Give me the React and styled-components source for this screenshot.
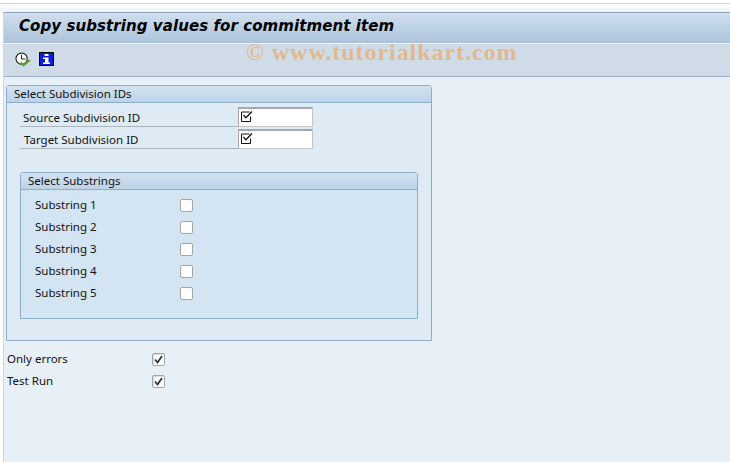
import React from 'react';
import styled, { createGlobalStyle } from 'styled-components';

const GlobalStyle = createGlobalStyle`
    html, body {
        margin: 0;
        padding: 0;
        background: #fff;
    }
    body {
        font-family: "Noto Sans", "DejaVu Sans", sans-serif;
        font-size: 11.5px;
        color: #111;
    }
`
const Screen = styled.div`
    width: 730px;
    height: 462px;
    overflow: hidden;
    position: relative;
    display: flex;
    flex-direction: column;
`
const MenuStrip = styled.div`
    height: 8px;
    margin-top: 3px;
    border-top: 1px solid #d4d6d8;
    background: linear-gradient(#fdfdfe, #eef2f7);
`
const Window = styled.div`
    flex: 1;
    display: flex;
    flex-direction: column;
    margin-left: 3px;
    border-left: 1px solid #c9d5e2;
    border-top: 1px solid #8fa3b8;
    background: #e8f0f7;
`
const TitleBar = styled.div`
    height: 30px;
    display: flex;
    align-items: flex-start;
    padding-left: 15px;
    background: linear-gradient(#cfdfee, #adc3da);
    border-bottom: 1px solid #eaf1f7;
`
const Title = styled.h1`
    margin: 4px 0 0;
    font-family: "DejaVu Sans", sans-serif;
    font-size: 15px;
    font-style: italic;
    font-weight: 700;
    letter-spacing: 0.08px;
    color: #000;
    white-space: nowrap;
`
const Toolbar = styled.div`
    height: 33px;
    display: flex;
    align-items: flex-start;
    gap: 8px;
    padding: 8px 0 0 11px;
    box-sizing: border-box;
    background: #cfdce7;
    border-bottom: 1px solid #9fb3c8;
`
const IconButton = styled.span`
    display: flex;
    width: 16px;
    height: 16px;
`
const Watermark = styled.div`
    position: absolute;
    left: 246px;
    top: 39px;
    font-family: "Liberation Serif", serif;
    font-size: 24px;
    font-weight: 700;
    letter-spacing: 0.95px;
    color: rgba(240, 160, 80, 0.6);
    white-space: nowrap;
`
const Content = styled.div`
    flex: 1;
    display: flex;
    flex-direction: column;
    padding: 8px 0 0 2px;
`
const Group = styled.section`
    width: ${p => p.$width}px;
    height: ${p => p.$height}px;
    box-sizing: border-box;
    border: 1px solid #8eaccb;
    border-top-left-radius: 3px;
    border-top-right-radius: 3px;
    background: ${p => p.$inner ? '#d3e4f2' : '#deeaf4'};
`
const GroupHeader = styled.div`
    height: 17px;
    box-sizing: border-box;
    display: flex;
    align-items: center;
    padding: 0 0 1px 7px;
    background: linear-gradient(#d3e2f0, #bdd3e8);
    border-bottom: 1px solid #8eaccb;
`
const FieldList = styled.div`
    display: flex;
    flex-direction: column;
    gap: 2px;
    padding: 4px 0 0 13px;
`
const FieldRow = styled.div`
    display: flex;
    align-items: stretch;
    height: 20px;
`
const FieldLabel = styled.label`
    width: 218px;
    box-sizing: border-box;
    padding: 1px 0 0 ${p => p.$shift || 3}px;
    display: flex;
    align-items: center;
    border-bottom: 1px solid #a9b4bf;
`
const KeyInput = styled.div`
    width: 75px;
    box-sizing: border-box;
    display: flex;
    align-items: flex-start;
    padding: 2px 0 0 2px;
    background: #fff;
    border: 1px solid #a5a9ad;
    border-right-color: #c4c7ca;
    border-bottom-color: #c4c7ca;
    border-top-width: 2px;
`
const InnerWrap = styled.div`
    padding: 23px 0 0 13px;
`
const CheckList = styled.div`
    display: flex;
    flex-direction: column;
    padding-top: 4px;
`
const CheckRow = styled.div`
    height: 22px;
    display: flex;
    align-items: center;
    padding-left: ${p => p.$left}px;
`
const CheckLabel = styled.label`
    width: ${p => p.$width}px;
    padding-bottom: 1px;
`
const Box = styled.span`
    width: 13px;
    height: 13px;
    box-sizing: border-box;
    display: flex;
    align-items: center;
    justify-content: center;
    background: #fff;
    border: 1px solid #a2a6aa;
    border-radius: 2px;
    box-shadow: ${p => p.$checked ? 'inset 1px 1px 0 #d8dadc' : 'none'};
`
const BottomList = styled.div`
    display: flex;
    flex-direction: column;
    padding-top: 7px;
`

const ClockIcon = () => (
    <svg width="17" height="15" viewBox="0 0 17 15">
        <circle cx="7" cy="6.5" r="6" fill="#fff" stroke="#111" strokeWidth="1.1" />
        <path d="M7 2.5V7H11" fill="none" stroke="#111" strokeWidth="1" />
        <path d="M6 10.5l3 3.2L16 8" fill="none" stroke="#5da82e" strokeWidth="2.3" />
    </svg>
)
const InfoIcon = () => (
    <svg width="15" height="14" viewBox="0 0 15 14">
        <rect x="0.5" y="0.5" width="14" height="13" fill="#0a1fd6" stroke="#000" />
        <rect x="5.5" y="2" width="4" height="2" fill="#fff" />
        <path d="M4 5.5h5.5V10.5H11V12H4V10.5h2V7H4z" fill="#fff" />
    </svg>
)
const RequiredMark = () => (
    <svg width="12" height="11" viewBox="0 0 12 11">
        <path d="M9.5 5.5v5H0.5V1H8.5" fill="none" stroke="#111" strokeWidth="1" />
        <path d="M2.5 4l2.4 2.8L11 .5" fill="none" stroke="#111" strokeWidth="1.3" />
    </svg>
)
const Tick = () => (
    <svg width="9" height="9" viewBox="0 0 9 9">
        <path d="M1 4.5l2.5 3L8 1" fill="none" stroke="#2e3340" strokeWidth="1.8" />
    </svg>
)

const substrings = ['Substring 1', 'Substring 2', 'Substring 3', 'Substring 4', 'Substring 5'];

const App = () => {
    return (
        <Screen>
            <GlobalStyle />
            <MenuStrip />
            <Window>
                <TitleBar>
                    <Title>Copy substring values for commitment item</Title>
                </TitleBar>
                <Toolbar>
                    <IconButton><ClockIcon /></IconButton>
                    <IconButton><InfoIcon /></IconButton>
                </Toolbar>
                <Content>
                    <Group $width={426} $height={256}>
                        <GroupHeader>Select Subdivision IDs</GroupHeader>
                        <FieldList>
                            <FieldRow>
                                <FieldLabel>Source Subdivision ID</FieldLabel>
                                <KeyInput><RequiredMark /></KeyInput>
                            </FieldRow>
                            <FieldRow>
                                <FieldLabel $shift={4}>Target Subdivision ID</FieldLabel>
                                <KeyInput><RequiredMark /></KeyInput>
                            </FieldRow>
                        </FieldList>
                        <InnerWrap>
                            <Group $inner $width={398} $height={147}>
                                <GroupHeader>Select Substrings</GroupHeader>
                                <CheckList>
                                    {substrings.map(item => (
                                        <CheckRow key={item} $left={14}>
                                            <CheckLabel $width={145}>{item}</CheckLabel>
                                            <Box />
                                        </CheckRow>
                                    ))}
                                </CheckList>
                            </Group>
                        </InnerWrap>
                    </Group>
                    <BottomList>
                        <CheckRow $left={1}>
                            <CheckLabel $width={145}>Only errors</CheckLabel>
                            <Box $checked><Tick /></Box>
                        </CheckRow>
                        <CheckRow $left={1}>
                            <CheckLabel $width={145}>Test Run</CheckLabel>
                            <Box $checked><Tick /></Box>
                        </CheckRow>
                    </BottomList>
                </Content>
            </Window>
            <Watermark>© www.tutorialkart.com</Watermark>
        </Screen>
    )
}
export default App
